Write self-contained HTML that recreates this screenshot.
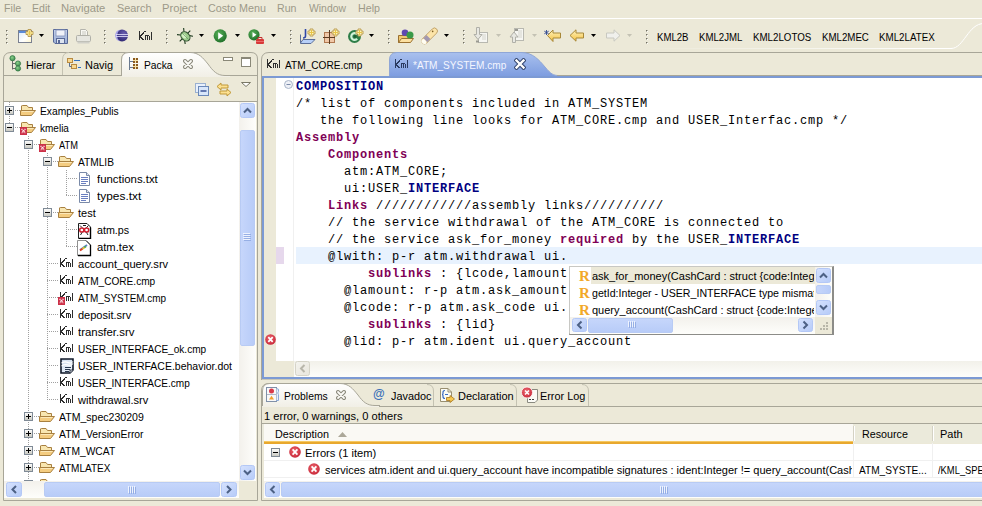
<!DOCTYPE html><html><head><meta charset="utf-8"><style>html,body{margin:0;padding:0;width:982px;height:506px;overflow:hidden;background:#ECE9D8;font-family:"Liberation Sans",sans-serif;position:relative}div,svg{box-sizing:border-box}</style></head><body>
<div style="position:absolute;left:4px;top:2px;font-size:11px;line-height:13px;white-space:pre;color:#9C9988;transform:scaleX(0.9688);transform-origin:0 0;">File</div>
<div style="position:absolute;left:32px;top:2px;font-size:11px;line-height:13px;white-space:pre;color:#9C9988;transform:scaleX(0.9611);transform-origin:0 0;">Edit</div>
<div style="position:absolute;left:61px;top:2px;font-size:11px;line-height:13px;white-space:pre;color:#9C9988;transform:scaleX(1.0214);transform-origin:0 0;">Navigate</div>
<div style="position:absolute;left:117px;top:2px;font-size:11px;line-height:13px;white-space:pre;color:#9C9988;transform:scaleX(0.9879);transform-origin:0 0;">Search</div>
<div style="position:absolute;left:162px;top:2px;font-size:11px;line-height:13px;white-space:pre;color:#9C9988;transform:scaleX(1.0152);transform-origin:0 0;">Project</div>
<div style="position:absolute;left:208px;top:2px;font-size:11px;line-height:13px;white-space:pre;color:#9C9988;transform:scaleX(0.9776);transform-origin:0 0;">Costo Menu</div>
<div style="position:absolute;left:277px;top:2px;font-size:11px;line-height:13px;white-space:pre;color:#9C9988;transform:scaleX(0.9632);transform-origin:0 0;">Run</div>
<div style="position:absolute;left:309px;top:2px;font-size:11px;line-height:13px;white-space:pre;color:#9C9988;transform:scaleX(0.9436);transform-origin:0 0;">Window</div>
<div style="position:absolute;left:358px;top:2px;font-size:11px;line-height:13px;white-space:pre;color:#9C9988;transform:scaleX(0.9714);transform-origin:0 0;">Help</div>
<div style="position:absolute;left:0px;top:18px;width:982px;height:1px;background:#fff"></div>
<svg style="position:absolute;left:900px;top:19px;" width="82" height="34" viewBox="0 0 82 34"><path d="M0 29.5H51C64 29.5 68 4.5 84 4.5" fill="none" stroke="#fff" stroke-width="1"/></svg>
<div style="position:absolute;left:640px;top:48px;width:312px;height:1px;background:linear-gradient(90deg,rgba(255,255,255,0),#fff)"></div>
<div style="position:absolute;left:6px;top:30px;width:2px;height:2px;background:#fff"></div>
<div style="position:absolute;left:6px;top:30px;width:1px;height:1px;background:#6E6C60"></div>
<div style="position:absolute;left:7px;top:30px;width:1px;height:1px;background:#B8B6A6"></div>
<div style="position:absolute;left:6px;top:31px;width:1px;height:1px;background:#B8B6A6"></div>
<div style="position:absolute;left:6px;top:34px;width:2px;height:2px;background:#fff"></div>
<div style="position:absolute;left:6px;top:34px;width:1px;height:1px;background:#6E6C60"></div>
<div style="position:absolute;left:7px;top:34px;width:1px;height:1px;background:#B8B6A6"></div>
<div style="position:absolute;left:6px;top:35px;width:1px;height:1px;background:#B8B6A6"></div>
<div style="position:absolute;left:6px;top:38px;width:2px;height:2px;background:#fff"></div>
<div style="position:absolute;left:6px;top:38px;width:1px;height:1px;background:#6E6C60"></div>
<div style="position:absolute;left:7px;top:38px;width:1px;height:1px;background:#B8B6A6"></div>
<div style="position:absolute;left:6px;top:39px;width:1px;height:1px;background:#B8B6A6"></div>
<div style="position:absolute;left:6px;top:42px;width:2px;height:2px;background:#fff"></div>
<div style="position:absolute;left:6px;top:42px;width:1px;height:1px;background:#6E6C60"></div>
<div style="position:absolute;left:7px;top:42px;width:1px;height:1px;background:#B8B6A6"></div>
<div style="position:absolute;left:6px;top:43px;width:1px;height:1px;background:#B8B6A6"></div>
<svg style="position:absolute;left:18px;top:29px;" width="16" height="15" viewBox="0 0 16 15"><defs><linearGradient id="nwg" x1="0" y1="0" x2="1" y2="1"><stop offset="0" stop-color="#D8E8FA"/><stop offset="0.6" stop-color="#FFFFFF"/><stop offset="1" stop-color="#FFF6C8"/></linearGradient></defs><rect x="0.5" y="1.5" width="13" height="12" fill="url(#nwg)" stroke="#7A8090"/><rect x="1" y="2" width="9" height="2" fill="#5A8AD8"/><path d="M10.0 0.5h3v2h2v3h-2v2h-3v-2h-2v-3h2z" fill="#FFF6B8" stroke="#B8964A" stroke-width="0.9" stroke-linejoin="round"/><path d="M11.5 1.5V6.5M9.0 4H14.0" stroke="#E8C448" stroke-width="1"/></svg>
<svg style="position:absolute;left:39px;top:34px;" width="5" height="3" viewBox="0 0 5 3"><path d="M0 0H5L2.5 3Z" fill="#000"/></svg>
<svg style="position:absolute;left:53px;top:29px;" width="16" height="15" viewBox="0 0 16 15"><defs><linearGradient id="svg1" x1="0" y1="0" x2="0" y2="1"><stop offset="0" stop-color="#C8D4EC"/><stop offset="1" stop-color="#98ACD4"/></linearGradient></defs><path d="M0.5 0.5H14.5V14.5H2L0.5 13Z" fill="url(#svg1)" stroke="#5A6A98"/><rect x="3" y="1" width="9" height="6" fill="#F0F2F8" stroke="#8090B8" stroke-width="0.8"/><rect x="3.5" y="9.5" width="8" height="5" fill="#DDE4F0" stroke="#5A6A98"/><rect x="5" y="11" width="2" height="3.5" fill="#5A6A98"/></svg>
<svg style="position:absolute;left:76px;top:29px;" width="16" height="15" viewBox="0 0 16 15"><path d="M4.5 6.5V0.5H9.5L11.5 2.5V6.5" fill="#F8F8F4" stroke="#B4B4AC"/><path d="M6 3H10M6 5H10" stroke="#C8C8C0"/><rect x="0.5" y="6.5" width="14" height="6" rx="1" fill="#E6E6E0" stroke="#B0B0A8"/><rect x="1.5" y="12.5" width="12" height="2" fill="#CFCFC8"/></svg>
<div style="position:absolute;left:104px;top:30px;width:2px;height:2px;background:#fff"></div>
<div style="position:absolute;left:104px;top:30px;width:1px;height:1px;background:#6E6C60"></div>
<div style="position:absolute;left:105px;top:30px;width:1px;height:1px;background:#B8B6A6"></div>
<div style="position:absolute;left:104px;top:31px;width:1px;height:1px;background:#B8B6A6"></div>
<div style="position:absolute;left:104px;top:34px;width:2px;height:2px;background:#fff"></div>
<div style="position:absolute;left:104px;top:34px;width:1px;height:1px;background:#6E6C60"></div>
<div style="position:absolute;left:105px;top:34px;width:1px;height:1px;background:#B8B6A6"></div>
<div style="position:absolute;left:104px;top:35px;width:1px;height:1px;background:#B8B6A6"></div>
<div style="position:absolute;left:104px;top:38px;width:2px;height:2px;background:#fff"></div>
<div style="position:absolute;left:104px;top:38px;width:1px;height:1px;background:#6E6C60"></div>
<div style="position:absolute;left:105px;top:38px;width:1px;height:1px;background:#B8B6A6"></div>
<div style="position:absolute;left:104px;top:39px;width:1px;height:1px;background:#B8B6A6"></div>
<div style="position:absolute;left:104px;top:42px;width:2px;height:2px;background:#fff"></div>
<div style="position:absolute;left:104px;top:42px;width:1px;height:1px;background:#6E6C60"></div>
<div style="position:absolute;left:105px;top:42px;width:1px;height:1px;background:#B8B6A6"></div>
<div style="position:absolute;left:104px;top:43px;width:1px;height:1px;background:#B8B6A6"></div>
<svg style="position:absolute;left:114px;top:29px;" width="15" height="14" viewBox="0 0 15 14"><defs><radialGradient id="ecl" cx="0.65" cy="0.35" r="0.7"><stop offset="0" stop-color="#6A5FB0"/><stop offset="1" stop-color="#2C2570"/></radialGradient></defs><circle cx="8" cy="6.5" r="6" fill="url(#ecl)"/><path d="M1 6.5Q2 1 6 0.8Q3 3 3 6.5Q3 10 6 12.2Q2 12 1 6.5Z" fill="#A8A4E8"/><path d="M2 5.5H14M2 7.5H14" stroke="#E8E8FF" stroke-width="0.8"/></svg>
<svg style="position:absolute;left:139px;top:31px;" width="13" height="9" viewBox="0 0 13 9"><g fill="#2E2E2E" shape-rendering="crispEdges"><rect x="0" y="0" width="1" height="9"/><rect x="1" y="4" width="1" height="2"/><rect x="2" y="3" width="1" height="2"/><rect x="3" y="2" width="1" height="2"/><rect x="4" y="1" width="1" height="2"/><rect x="5" y="0" width="2" height="1"/><rect x="1" y="6" width="2" height="1"/><rect x="2" y="7" width="2" height="1"/><rect x="3" y="8" width="2" height="1"/><rect x="6" y="4" width="4" height="1"/><rect x="6" y="5" width="1" height="4"/><rect x="8" y="5" width="1" height="4"/><rect x="10" y="5" width="1" height="4"/><rect x="12" y="1" width="1" height="8"/></g></svg>
<div style="position:absolute;left:166px;top:30px;width:2px;height:2px;background:#fff"></div>
<div style="position:absolute;left:166px;top:30px;width:1px;height:1px;background:#6E6C60"></div>
<div style="position:absolute;left:167px;top:30px;width:1px;height:1px;background:#B8B6A6"></div>
<div style="position:absolute;left:166px;top:31px;width:1px;height:1px;background:#B8B6A6"></div>
<div style="position:absolute;left:166px;top:34px;width:2px;height:2px;background:#fff"></div>
<div style="position:absolute;left:166px;top:34px;width:1px;height:1px;background:#6E6C60"></div>
<div style="position:absolute;left:167px;top:34px;width:1px;height:1px;background:#B8B6A6"></div>
<div style="position:absolute;left:166px;top:35px;width:1px;height:1px;background:#B8B6A6"></div>
<div style="position:absolute;left:166px;top:38px;width:2px;height:2px;background:#fff"></div>
<div style="position:absolute;left:166px;top:38px;width:1px;height:1px;background:#6E6C60"></div>
<div style="position:absolute;left:167px;top:38px;width:1px;height:1px;background:#B8B6A6"></div>
<div style="position:absolute;left:166px;top:39px;width:1px;height:1px;background:#B8B6A6"></div>
<div style="position:absolute;left:166px;top:42px;width:2px;height:2px;background:#fff"></div>
<div style="position:absolute;left:166px;top:42px;width:1px;height:1px;background:#6E6C60"></div>
<div style="position:absolute;left:167px;top:42px;width:1px;height:1px;background:#B8B6A6"></div>
<div style="position:absolute;left:166px;top:43px;width:1px;height:1px;background:#B8B6A6"></div>
<svg style="position:absolute;left:177px;top:28px;" width="16" height="16" viewBox="0 0 16 16"><g transform="rotate(-45 8 8)"><g stroke="#1E3A1E" stroke-width="1.1" fill="none"><path d="M5.5 4L3 1M10.5 4L13 1M4 8H0.5M12 8H15.5M4.5 11L2 14.5M11.5 11L14 14.5"/></g><ellipse cx="8" cy="8.5" rx="4" ry="5.2" fill="#9CCC8C" stroke="#2A4A2A" stroke-width="1"/><ellipse cx="7.2" cy="7.5" rx="1.8" ry="2.6" fill="#D4F0C4"/><path d="M8 4V13" stroke="#5A8A5A" stroke-width="0.6"/></g></svg>
<svg style="position:absolute;left:199px;top:34px;" width="5" height="3" viewBox="0 0 5 3"><path d="M0 0H5L2.5 3Z" fill="#000"/></svg>
<svg style="position:absolute;left:213px;top:29px;" width="15" height="14" viewBox="0 0 15 14"><defs><radialGradient id="rg" cx="0.4" cy="0.35" r="0.7"><stop offset="0" stop-color="#58B058"/><stop offset="1" stop-color="#1E6E28"/></radialGradient></defs><circle cx="7.2" cy="6.8" r="6.6" fill="url(#rg)"/><path d="M5.2 3.2L10.2 6.8L5.2 10.4Z" fill="#fff"/></svg>
<svg style="position:absolute;left:235px;top:34px;" width="5" height="3" viewBox="0 0 5 3"><path d="M0 0H5L2.5 3Z" fill="#000"/></svg>
<svg style="position:absolute;left:248px;top:29px;" width="18" height="16" viewBox="0 0 18 16"><defs><radialGradient id="rg2" cx="0.4" cy="0.35" r="0.7"><stop offset="0" stop-color="#58B058"/><stop offset="1" stop-color="#1E6E28"/></radialGradient></defs><circle cx="6" cy="5.8" r="5.6" fill="url(#rg2)"/><path d="M4.5 3L8.5 5.8L4.5 8.6Z" fill="#fff"/><rect x="8" y="10" width="8" height="5" rx="1" fill="#D83838"/><path d="M10 10V8.5H14V10" fill="none" stroke="#C03030"/><path d="M8 12.5H16" stroke="#F08080" stroke-width="0.7"/></svg>
<svg style="position:absolute;left:271px;top:34px;" width="5" height="3" viewBox="0 0 5 3"><path d="M0 0H5L2.5 3Z" fill="#000"/></svg>
<div style="position:absolute;left:290px;top:30px;width:2px;height:2px;background:#fff"></div>
<div style="position:absolute;left:290px;top:30px;width:1px;height:1px;background:#6E6C60"></div>
<div style="position:absolute;left:291px;top:30px;width:1px;height:1px;background:#B8B6A6"></div>
<div style="position:absolute;left:290px;top:31px;width:1px;height:1px;background:#B8B6A6"></div>
<div style="position:absolute;left:290px;top:34px;width:2px;height:2px;background:#fff"></div>
<div style="position:absolute;left:290px;top:34px;width:1px;height:1px;background:#6E6C60"></div>
<div style="position:absolute;left:291px;top:34px;width:1px;height:1px;background:#B8B6A6"></div>
<div style="position:absolute;left:290px;top:35px;width:1px;height:1px;background:#B8B6A6"></div>
<div style="position:absolute;left:290px;top:38px;width:2px;height:2px;background:#fff"></div>
<div style="position:absolute;left:290px;top:38px;width:1px;height:1px;background:#6E6C60"></div>
<div style="position:absolute;left:291px;top:38px;width:1px;height:1px;background:#B8B6A6"></div>
<div style="position:absolute;left:290px;top:39px;width:1px;height:1px;background:#B8B6A6"></div>
<div style="position:absolute;left:290px;top:42px;width:2px;height:2px;background:#fff"></div>
<div style="position:absolute;left:290px;top:42px;width:1px;height:1px;background:#6E6C60"></div>
<div style="position:absolute;left:291px;top:42px;width:1px;height:1px;background:#B8B6A6"></div>
<div style="position:absolute;left:290px;top:43px;width:1px;height:1px;background:#B8B6A6"></div>
<svg style="position:absolute;left:299px;top:28px;" width="18" height="17" viewBox="0 0 18 17"><path d="M1.5 6.5V15.5H12L16 11.5H4L1.5 15" fill="#B8D0F8" stroke="#5C6E98"/><path d="M6.5 1V8Q6.5 10 4 10" fill="none" stroke="#3048A8" stroke-width="1.6"/><path d="M11.0 1.0h3v2h2v3h-2v2h-3v-2h-2v-3h2z" fill="#FFF6B8" stroke="#B8964A" stroke-width="0.9" stroke-linejoin="round"/><path d="M12.5 2.0V7.0M10.0 4.5H15.0" stroke="#E8C448" stroke-width="1"/></svg>
<svg style="position:absolute;left:323px;top:28px;" width="17" height="17" viewBox="0 0 17 17"><rect x="1.5" y="4.5" width="10" height="10" fill="#F0C8A8" stroke="#B07850"/><path d="M6.5 2V16M0 9.5H12" stroke="#5A3A20"/><path d="M11.0 1.0h3v2h2v3h-2v2h-3v-2h-2v-3h2z" fill="#FFF6B8" stroke="#B8964A" stroke-width="0.9" stroke-linejoin="round"/><path d="M12.5 2.0V7.0M10.0 4.5H15.0" stroke="#E8C448" stroke-width="1"/></svg>
<svg style="position:absolute;left:347px;top:28px;" width="17" height="17" viewBox="0 0 17 17"><circle cx="7.5" cy="8.5" r="6.5" fill="#2E7E48"/><path d="M10.2 6.2A3.4 3.4 0 1 0 10.2 10.8" fill="none" stroke="#CFF2D8" stroke-width="2.2"/><circle cx="8" cy="8.5" r="1.4" fill="#1E5E34"/><path d="M11.0 1.0h3v2h2v3h-2v2h-3v-2h-2v-3h2z" fill="#FFF6B8" stroke="#B8964A" stroke-width="0.9" stroke-linejoin="round"/><path d="M12.5 2.0V7.0M10.0 4.5H15.0" stroke="#E8C448" stroke-width="1"/></svg>
<svg style="position:absolute;left:369px;top:34px;" width="5" height="3" viewBox="0 0 5 3"><path d="M0 0H5L2.5 3Z" fill="#000"/></svg>
<div style="position:absolute;left:388px;top:30px;width:2px;height:2px;background:#fff"></div>
<div style="position:absolute;left:388px;top:30px;width:1px;height:1px;background:#6E6C60"></div>
<div style="position:absolute;left:389px;top:30px;width:1px;height:1px;background:#B8B6A6"></div>
<div style="position:absolute;left:388px;top:31px;width:1px;height:1px;background:#B8B6A6"></div>
<div style="position:absolute;left:388px;top:34px;width:2px;height:2px;background:#fff"></div>
<div style="position:absolute;left:388px;top:34px;width:1px;height:1px;background:#6E6C60"></div>
<div style="position:absolute;left:389px;top:34px;width:1px;height:1px;background:#B8B6A6"></div>
<div style="position:absolute;left:388px;top:35px;width:1px;height:1px;background:#B8B6A6"></div>
<div style="position:absolute;left:388px;top:38px;width:2px;height:2px;background:#fff"></div>
<div style="position:absolute;left:388px;top:38px;width:1px;height:1px;background:#6E6C60"></div>
<div style="position:absolute;left:389px;top:38px;width:1px;height:1px;background:#B8B6A6"></div>
<div style="position:absolute;left:388px;top:39px;width:1px;height:1px;background:#B8B6A6"></div>
<div style="position:absolute;left:388px;top:42px;width:2px;height:2px;background:#fff"></div>
<div style="position:absolute;left:388px;top:42px;width:1px;height:1px;background:#6E6C60"></div>
<div style="position:absolute;left:389px;top:42px;width:1px;height:1px;background:#B8B6A6"></div>
<div style="position:absolute;left:388px;top:43px;width:1px;height:1px;background:#B8B6A6"></div>
<svg style="position:absolute;left:397px;top:28px;" width="18" height="16" viewBox="0 0 18 16"><path d="M1.5 7.5H13.5L13 14.5H1.5Z" fill="#F0C870" stroke="#9A7030"/><path d="M1.5 14.5L4.5 10.5H16.5L13.5 14.5Z" fill="#FCE0A0" stroke="#9A7030"/><circle cx="8" cy="4.8" r="3.3" fill="#6048B0"/><circle cx="13" cy="7" r="3.5" fill="#3A9A48"/></svg>
<svg style="position:absolute;left:420px;top:27px;" width="19" height="18" viewBox="0 0 19 18"><g transform="rotate(-45 9.5 9)"><rect x="-0.5" y="6" width="20" height="6" rx="3" fill="#FCE4A8" stroke="#B89860" stroke-width="0.8"/><rect x="3.5" y="6.2" width="4.5" height="5.6" fill="#A298B0"/><rect x="-0.5" y="6.2" width="4" height="5.6" rx="2.5" fill="#FFFDF2"/><circle cx="15" cy="8" r="0.8" fill="#7A5A20"/></g></svg>
<svg style="position:absolute;left:444px;top:34px;" width="5" height="3" viewBox="0 0 5 3"><path d="M0 0H5L2.5 3Z" fill="#000"/></svg>
<div style="position:absolute;left:463px;top:30px;width:2px;height:2px;background:#fff"></div>
<div style="position:absolute;left:463px;top:30px;width:1px;height:1px;background:#6E6C60"></div>
<div style="position:absolute;left:464px;top:30px;width:1px;height:1px;background:#B8B6A6"></div>
<div style="position:absolute;left:463px;top:31px;width:1px;height:1px;background:#B8B6A6"></div>
<div style="position:absolute;left:463px;top:34px;width:2px;height:2px;background:#fff"></div>
<div style="position:absolute;left:463px;top:34px;width:1px;height:1px;background:#6E6C60"></div>
<div style="position:absolute;left:464px;top:34px;width:1px;height:1px;background:#B8B6A6"></div>
<div style="position:absolute;left:463px;top:35px;width:1px;height:1px;background:#B8B6A6"></div>
<div style="position:absolute;left:463px;top:38px;width:2px;height:2px;background:#fff"></div>
<div style="position:absolute;left:463px;top:38px;width:1px;height:1px;background:#6E6C60"></div>
<div style="position:absolute;left:464px;top:38px;width:1px;height:1px;background:#B8B6A6"></div>
<div style="position:absolute;left:463px;top:39px;width:1px;height:1px;background:#B8B6A6"></div>
<div style="position:absolute;left:463px;top:42px;width:2px;height:2px;background:#fff"></div>
<div style="position:absolute;left:463px;top:42px;width:1px;height:1px;background:#6E6C60"></div>
<div style="position:absolute;left:464px;top:42px;width:1px;height:1px;background:#B8B6A6"></div>
<div style="position:absolute;left:463px;top:43px;width:1px;height:1px;background:#B8B6A6"></div>
<svg style="position:absolute;left:473px;top:27px;" width="16" height="17" viewBox="0 0 16 17"><rect x="5.5" y="5.5" width="9" height="10" fill="#F6F6F2" stroke="#B8B8B0"/><path d="M7 8H13M9 10H13M9 12H13" stroke="#D4D4CC"/><path d="M3.5 0.5H6.5V7.5H9L5 12.5L1 7.5H3.5Z" fill="#E8E8E2" stroke="#B0B0A8"/><rect x="3" y="13.5" width="3" height="2" fill="#9A9A92"/></svg>
<svg style="position:absolute;left:496px;top:34px;" width="5" height="3" viewBox="0 0 5 3"><path d="M0 0H5L2.5 3Z" fill="#C4C2B4"/></svg>
<svg style="position:absolute;left:509px;top:27px;" width="16" height="17" viewBox="0 0 16 17"><rect x="5.5" y="1.5" width="9" height="12" fill="#F6F6F2" stroke="#B8B8B0"/><path d="M9 4H13M9 6H13M9 8H13M9 10H13" stroke="#D4D4CC"/><rect x="6" y="2" width="3" height="2" fill="#9A9A92"/><path d="M3.5 15.5H6.5V10H9L5 5L1 10H3.5Z" fill="#E8E8E2" stroke="#B0B0A8"/></svg>
<svg style="position:absolute;left:532px;top:34px;" width="5" height="3" viewBox="0 0 5 3"><path d="M0 0H5L2.5 3Z" fill="#C4C2B4"/></svg>
<svg style="position:absolute;left:544px;top:29px;" width="18" height="14" viewBox="0 0 18 14"><defs><linearGradient id="yarr" x1="0" y1="0" x2="0" y2="1"><stop offset="0" stop-color="#FFF4C0"/><stop offset="1" stop-color="#F4C040"/></linearGradient></defs><path d="M3.5 6.5L9 1V4H16.5V9H9V12.5Z" fill="url(#yarr)" stroke="#A88838" stroke-linejoin="round"/><path d="M2.5 1V6M0.3 2.2L4.7 4.8M0.3 4.8L4.7 2.2" stroke="#304890" stroke-width="0.9"/></svg>
<svg style="position:absolute;left:569px;top:29px;" width="16" height="14" viewBox="0 0 16 14"><path d="M1 6.5L7 0.8V4H14.5V9H7V12.2Z" fill="url(#yarr)" stroke="#A88838" stroke-linejoin="round"/></svg>
<svg style="position:absolute;left:591px;top:34px;" width="5" height="3" viewBox="0 0 5 3"><path d="M0 0H5L2.5 3Z" fill="#000"/></svg>
<svg style="position:absolute;left:605px;top:29px;" width="16" height="14" viewBox="0 0 16 14"><path d="M15 6.5L9 0.8V4H1.5V9H9V12.2Z" fill="#F0F0EC" stroke="#C8C8C0" stroke-linejoin="round"/></svg>
<svg style="position:absolute;left:627px;top:34px;" width="5" height="3" viewBox="0 0 5 3"><path d="M0 0H5L2.5 3Z" fill="#C4C2B4"/></svg>
<div style="position:absolute;left:646px;top:30px;width:2px;height:2px;background:#fff"></div>
<div style="position:absolute;left:646px;top:30px;width:1px;height:1px;background:#6E6C60"></div>
<div style="position:absolute;left:647px;top:30px;width:1px;height:1px;background:#B8B6A6"></div>
<div style="position:absolute;left:646px;top:31px;width:1px;height:1px;background:#B8B6A6"></div>
<div style="position:absolute;left:646px;top:34px;width:2px;height:2px;background:#fff"></div>
<div style="position:absolute;left:646px;top:34px;width:1px;height:1px;background:#6E6C60"></div>
<div style="position:absolute;left:647px;top:34px;width:1px;height:1px;background:#B8B6A6"></div>
<div style="position:absolute;left:646px;top:35px;width:1px;height:1px;background:#B8B6A6"></div>
<div style="position:absolute;left:646px;top:38px;width:2px;height:2px;background:#fff"></div>
<div style="position:absolute;left:646px;top:38px;width:1px;height:1px;background:#6E6C60"></div>
<div style="position:absolute;left:647px;top:38px;width:1px;height:1px;background:#B8B6A6"></div>
<div style="position:absolute;left:646px;top:39px;width:1px;height:1px;background:#B8B6A6"></div>
<div style="position:absolute;left:646px;top:42px;width:2px;height:2px;background:#fff"></div>
<div style="position:absolute;left:646px;top:42px;width:1px;height:1px;background:#6E6C60"></div>
<div style="position:absolute;left:647px;top:42px;width:1px;height:1px;background:#B8B6A6"></div>
<div style="position:absolute;left:646px;top:43px;width:1px;height:1px;background:#B8B6A6"></div>
<div style="position:absolute;left:657px;top:31px;font-size:11px;line-height:13px;white-space:pre;color:#000;transform:scaleX(0.8743);transform-origin:0 0;">KML2B</div>
<div style="position:absolute;left:699px;top:31px;font-size:11px;line-height:13px;white-space:pre;color:#000;transform:scaleX(0.875);transform-origin:0 0;">KML2JML</div>
<div style="position:absolute;left:753px;top:31px;font-size:11px;line-height:13px;white-space:pre;color:#000;transform:scaleX(0.8846);transform-origin:0 0;">KML2LOTOS</div>
<div style="position:absolute;left:822px;top:31px;font-size:11px;line-height:13px;white-space:pre;color:#000;transform:scaleX(0.8808);transform-origin:0 0;">KML2MEC</div>
<div style="position:absolute;left:879px;top:31px;font-size:11px;line-height:13px;white-space:pre;color:#000;transform:scaleX(0.8871);transform-origin:0 0;">KML2LATEX</div>
<svg style="position:absolute;left:3px;top:52px;" width="255" height="449" viewBox="0 0 255 449"><path d="M0.5 448.5V8Q0.5 0.5 8 0.5H248Q254.5 0.5 254.5 7V448.5Z" fill="#ECE9D8" stroke="#A8A698"/></svg>
<svg style="position:absolute;left:3px;top:52px;" width="130" height="25" viewBox="0 0 130 25"><path d="M59.5 23V8Q59.5 0.5 66 0.5" fill="none" stroke="#C4C2B2"/><path d="M118.5 23V8Q118.5 0.5 125 0.5" fill="none" stroke="#C4C2B2"/></svg>
<svg style="position:absolute;left:120px;top:52px;" width="110" height="25" viewBox="0 0 110 25"><defs><linearGradient id="ptab" x1="0" y1="0" x2="0" y2="1"><stop offset="0" stop-color="#FFFFFF"/><stop offset="1" stop-color="#F1EFE6"/></linearGradient></defs><path d="M1.5 24V8Q1.5 0.5 9 0.5H70C79 0.5 83 6 88 12C93 19 97 23.5 105 23.5H110V25H1.5Z" fill="url(#ptab)"/><path d="M1.5 23V8Q1.5 0.5 9 0.5H70C79 0.5 83 6 88 12C93 19 97 23.5 105 23.5H110" fill="none" stroke="#A8A698"/></svg>
<div style="position:absolute;left:4px;top:75px;width:118px;height:1px;background:#A8A698"></div>
<div style="position:absolute;left:227px;top:75px;width:30px;height:1px;background:#A8A698"></div>
<svg style="position:absolute;left:9px;top:55px;" width="13" height="17" viewBox="0 0 13 17"><defs><radialGradient id="hg" cx="0.4" cy="0.35" r="0.7"><stop offset="0" stop-color="#8CD08C"/><stop offset="1" stop-color="#3A8A4A"/></radialGradient></defs><path d="M3.5 4V14.5M3.5 8.5H7M3.5 13.5H7" stroke="#6A6A6A" fill="none"/><circle cx="3.5" cy="3.2" r="2.6" fill="url(#hg)" stroke="#3A7A4A" stroke-width="0.8"/><circle cx="9" cy="8.5" r="2.6" fill="url(#hg)" stroke="#3A7A4A" stroke-width="0.8"/><circle cx="9" cy="13.5" r="2.6" fill="url(#hg)" stroke="#3A7A4A" stroke-width="0.8"/></svg>
<div style="position:absolute;left:26px;top:59px;font-size:11px;line-height:13px;white-space:pre;color:#000;transform:scaleX(0.9828);transform-origin:0 0;">Hierar</div>
<svg style="position:absolute;left:67px;top:58px;" width="16" height="12" viewBox="0 0 16 12"><rect x="0.5" y="0.5" width="5" height="4" fill="#F8D890" stroke="#B88A40"/><rect x="4.5" y="6.5" width="5" height="4" fill="#F8D890" stroke="#B88A40"/><path d="M2.5 5V8.5H4.5" stroke="#5A7090" fill="none"/><path d="M7 2.5H13" stroke="#3070C0"/><path d="M11 9.5H14" stroke="#3070C0"/></svg>
<div style="position:absolute;left:85px;top:59px;font-size:11px;line-height:13px;white-space:pre;color:#000;transform:scaleX(1.0);transform-origin:0 0;">Navig</div>
<svg style="position:absolute;left:128px;top:56px;" width="12" height="15" viewBox="0 0 12 15"><g shape-rendering="crispEdges"><rect x="1" y="1" width="1" height="13" fill="#6A7A90"/><rect x="1" y="5" width="4" height="1" fill="#6A7A90"/><rect x="1" y="11" width="4" height="1" fill="#6A7A90"/><rect x="5" y="2" width="5" height="5" fill="#F8E4A8"/><rect x="5" y="8" width="5" height="5" fill="#F8E4A8"/><g fill="#8A5A20"><rect x="5" y="2" width="2" height="2"/><rect x="5" y="5" width="2" height="2"/><rect x="8" y="2" width="2" height="2"/><rect x="8" y="5" width="2" height="2"/><rect x="5" y="8" width="2" height="2"/><rect x="5" y="11" width="2" height="2"/><rect x="8" y="8" width="2" height="2"/><rect x="8" y="11" width="2" height="2"/></g></g></svg>
<div style="position:absolute;left:144px;top:59px;font-size:11px;line-height:13px;white-space:pre;color:#000;transform:scaleX(0.9333);transform-origin:0 0;">Packa</div>
<svg style="position:absolute;left:183px;top:59px;" width="10" height="10" viewBox="0 0 10 10"><path d="M2 2L8 8M8 2L2 8" stroke="#8C8A7C" stroke-width="3.9" stroke-linecap="round"/><path d="M2 2L8 8M8 2L2 8" stroke="#FBFAF6" stroke-width="1.8" stroke-linecap="round"/></svg>
<div style="position:absolute;left:223px;top:57px;width:10px;height:4px;background:#fff;border:1px solid #8A8878"></div>
<div style="position:absolute;left:241px;top:57px;width:10px;height:10px;background:#fff;border:1px solid #8A8878;border-top-width:2px"></div>
<svg style="position:absolute;left:195px;top:83px;" width="14" height="13" viewBox="0 0 14 13"><rect x="0.5" y="0.5" width="10" height="9" fill="#E8F0FC" stroke="#9AB0D0"/><rect x="3.5" y="3.5" width="10" height="9" fill="#D8E6FA" stroke="#6A88B8"/><path d="M5.5 8H11.5" stroke="#304890" stroke-width="1.4"/></svg>
<svg style="position:absolute;left:216px;top:82px;" width="16" height="15" viewBox="0 0 16 15"><path d="M1 4.5L5 1V3H12V6H5V8Z" fill="#FCE090" stroke="#C09838" stroke-linejoin="round"/><path d="M15 10.5L11 7V9H4V12H11V14Z" fill="#FCE090" stroke="#C09838" stroke-linejoin="round"/></svg>
<svg style="position:absolute;left:241px;top:82px;" width="10" height="5" viewBox="0 0 10 5"><path d="M0.5 0.5H9.5L5 4.5Z" fill="#fff" stroke="#7A7866"/></svg>
<div style="position:absolute;left:4px;top:101px;width:253px;height:1px;background:#A8A698"></div>
<div style="position:absolute;left:4px;top:102px;width:235px;height:379px;background:#fff;overflow:hidden"></div>
<div style="position:absolute;left:9px;top:102px;width:1px;height:25px;background:repeating-linear-gradient(#A0A0A0 0 1px,transparent 1px 2px)"></div>
<div style="position:absolute;left:28px;top:136px;width:1px;height:348px;background:repeating-linear-gradient(#A0A0A0 0 1px,transparent 1px 2px)"></div>
<div style="position:absolute;left:47px;top:153px;width:1px;height:246px;background:repeating-linear-gradient(#A0A0A0 0 1px,transparent 1px 2px)"></div>
<div style="position:absolute;left:66px;top:170px;width:1px;height:25px;background:repeating-linear-gradient(#A0A0A0 0 1px,transparent 1px 2px)"></div>
<div style="position:absolute;left:66px;top:221px;width:1px;height:25px;background:repeating-linear-gradient(#A0A0A0 0 1px,transparent 1px 2px)"></div>
<div style="position:absolute;left:9px;top:110px;width:11px;height:1px;background:repeating-linear-gradient(90deg,#A0A0A0 0 1px,transparent 1px 2px)"></div>
<svg style="position:absolute;left:5px;top:106px;" width="9" height="9" viewBox="0 0 9 9"><defs><linearGradient id="eg" x1="0" y1="0" x2="0" y2="1"><stop offset="0" stop-color="#fff"/><stop offset="1" stop-color="#C6C6BE"/></linearGradient></defs><rect x="0.5" y="0.5" width="8" height="8" fill="url(#eg)" stroke="#7F8A96"/><path d="M2 4.5H7" stroke="#000"/><path d="M4.5 2V7" stroke="#000"/></svg>
<svg style="position:absolute;left:19px;top:102px;" width="17" height="17" viewBox="0 0 17 17"><path d="M2.5 8.5V4Q2.5 3.5 3.5 3.5H8L9.5 5.5H13.5V8.5" fill="#F8E6B0" stroke="#A88040"/><path d="M1.5 8.5H16.5L12.5 13.5H1.5Z" fill="#F4CC80" stroke="#A88040" stroke-linejoin="round"/><path d="M3 9.5H14.5" stroke="#FCE8B8"/></svg>
<div style="position:absolute;left:40px;top:105px;font-size:11px;line-height:13px;white-space:pre;color:#000;transform:scaleX(0.9325);transform-origin:0 0;">Examples_Publis</div>
<div style="position:absolute;left:9px;top:127px;width:11px;height:1px;background:repeating-linear-gradient(90deg,#A0A0A0 0 1px,transparent 1px 2px)"></div>
<svg style="position:absolute;left:5px;top:123px;" width="9" height="9" viewBox="0 0 9 9"><defs><linearGradient id="eg" x1="0" y1="0" x2="0" y2="1"><stop offset="0" stop-color="#fff"/><stop offset="1" stop-color="#C6C6BE"/></linearGradient></defs><rect x="0.5" y="0.5" width="8" height="8" fill="url(#eg)" stroke="#7F8A96"/><path d="M2 4.5H7" stroke="#000"/></svg>
<svg style="position:absolute;left:19px;top:119px;" width="17" height="17" viewBox="0 0 17 17"><path d="M2.5 8.5V4Q2.5 3.5 3.5 3.5H8L9.5 5.5H13.5V8.5" fill="#F8E6B0" stroke="#A88040"/><path d="M1.5 8.5H16.5L12.5 13.5H1.5Z" fill="#F4CC80" stroke="#A88040" stroke-linejoin="round"/><path d="M3 9.5H14.5" stroke="#FCE8B8"/><rect x="1" y="8" width="7" height="8" fill="#CC3048"/><path d="M2.6 9.8L6.4 14.2M6.4 9.8L2.6 14.2" stroke="#FFE8EC" stroke-width="1.3" stroke-dasharray="1.2 0.6"/></svg>
<div style="position:absolute;left:40px;top:122px;font-size:11px;line-height:13px;white-space:pre;color:#000;transform:scaleX(0.9097);transform-origin:0 0;">kmelia</div>
<div style="position:absolute;left:28px;top:144px;width:11px;height:1px;background:repeating-linear-gradient(90deg,#A0A0A0 0 1px,transparent 1px 2px)"></div>
<svg style="position:absolute;left:24px;top:140px;" width="9" height="9" viewBox="0 0 9 9"><defs><linearGradient id="eg" x1="0" y1="0" x2="0" y2="1"><stop offset="0" stop-color="#fff"/><stop offset="1" stop-color="#C6C6BE"/></linearGradient></defs><rect x="0.5" y="0.5" width="8" height="8" fill="url(#eg)" stroke="#7F8A96"/><path d="M2 4.5H7" stroke="#000"/></svg>
<svg style="position:absolute;left:38px;top:136px;" width="17" height="17" viewBox="0 0 17 17"><path d="M2.5 8.5V4Q2.5 3.5 3.5 3.5H8L9.5 5.5H13.5V8.5" fill="#F8E6B0" stroke="#A88040"/><path d="M1.5 8.5H16.5L12.5 13.5H1.5Z" fill="#F4CC80" stroke="#A88040" stroke-linejoin="round"/><path d="M3 9.5H14.5" stroke="#FCE8B8"/><rect x="1" y="8" width="7" height="8" fill="#CC3048"/><path d="M2.6 9.8L6.4 14.2M6.4 9.8L2.6 14.2" stroke="#FFE8EC" stroke-width="1.3" stroke-dasharray="1.2 0.6"/></svg>
<div style="position:absolute;left:59px;top:139px;font-size:11px;line-height:13px;white-space:pre;color:#000;transform:scaleX(0.8409);transform-origin:0 0;">ATM</div>
<div style="position:absolute;left:47px;top:161px;width:11px;height:1px;background:repeating-linear-gradient(90deg,#A0A0A0 0 1px,transparent 1px 2px)"></div>
<svg style="position:absolute;left:43px;top:157px;" width="9" height="9" viewBox="0 0 9 9"><defs><linearGradient id="eg" x1="0" y1="0" x2="0" y2="1"><stop offset="0" stop-color="#fff"/><stop offset="1" stop-color="#C6C6BE"/></linearGradient></defs><rect x="0.5" y="0.5" width="8" height="8" fill="url(#eg)" stroke="#7F8A96"/><path d="M2 4.5H7" stroke="#000"/></svg>
<svg style="position:absolute;left:57px;top:153px;" width="17" height="17" viewBox="0 0 17 17"><path d="M2.5 8.5V4Q2.5 3.5 3.5 3.5H8L9.5 5.5H13.5V8.5" fill="#F8E6B0" stroke="#A88040"/><path d="M1.5 8.5H16.5L12.5 13.5H1.5Z" fill="#F4CC80" stroke="#A88040" stroke-linejoin="round"/><path d="M3 9.5H14.5" stroke="#FCE8B8"/></svg>
<div style="position:absolute;left:78px;top:156px;font-size:11px;line-height:13px;white-space:pre;color:#000;transform:scaleX(0.9237);transform-origin:0 0;">ATMLIB</div>
<div style="position:absolute;left:66px;top:178px;width:11px;height:1px;background:repeating-linear-gradient(90deg,#A0A0A0 0 1px,transparent 1px 2px)"></div>
<svg style="position:absolute;left:77px;top:171px;" width="16" height="16" viewBox="0 0 16 16"><path d="M2.5 1.5H9.5L12.5 4.5V14.5H2.5Z" fill="#fff" stroke="#7A8AA8"/><path d="M9.5 1.5V4.5H12.5" fill="#DDE4F0" stroke="#7A8AA8"/><path d="M4 6.5H11M4 8.5H11M4 10.5H11M4 12.5H9" stroke="#6A7FC0"/></svg>
<div style="position:absolute;left:97px;top:173px;font-size:11px;line-height:13px;white-space:pre;color:#000;transform:scaleX(1.0356);transform-origin:0 0;">functions.txt</div>
<div style="position:absolute;left:66px;top:195px;width:11px;height:1px;background:repeating-linear-gradient(90deg,#A0A0A0 0 1px,transparent 1px 2px)"></div>
<svg style="position:absolute;left:77px;top:188px;" width="16" height="16" viewBox="0 0 16 16"><path d="M2.5 1.5H9.5L12.5 4.5V14.5H2.5Z" fill="#fff" stroke="#7A8AA8"/><path d="M9.5 1.5V4.5H12.5" fill="#DDE4F0" stroke="#7A8AA8"/><path d="M4 6.5H11M4 8.5H11M4 10.5H11M4 12.5H9" stroke="#6A7FC0"/></svg>
<div style="position:absolute;left:97px;top:190px;font-size:11px;line-height:13px;white-space:pre;color:#000;transform:scaleX(1.0805);transform-origin:0 0;">types.txt</div>
<div style="position:absolute;left:47px;top:212px;width:11px;height:1px;background:repeating-linear-gradient(90deg,#A0A0A0 0 1px,transparent 1px 2px)"></div>
<svg style="position:absolute;left:43px;top:208px;" width="9" height="9" viewBox="0 0 9 9"><defs><linearGradient id="eg" x1="0" y1="0" x2="0" y2="1"><stop offset="0" stop-color="#fff"/><stop offset="1" stop-color="#C6C6BE"/></linearGradient></defs><rect x="0.5" y="0.5" width="8" height="8" fill="url(#eg)" stroke="#7F8A96"/><path d="M2 4.5H7" stroke="#000"/></svg>
<svg style="position:absolute;left:57px;top:204px;" width="17" height="17" viewBox="0 0 17 17"><path d="M2.5 8.5V4Q2.5 3.5 3.5 3.5H8L9.5 5.5H13.5V8.5" fill="#F8E6B0" stroke="#A88040"/><path d="M1.5 8.5H16.5L12.5 13.5H1.5Z" fill="#F4CC80" stroke="#A88040" stroke-linejoin="round"/><path d="M3 9.5H14.5" stroke="#FCE8B8"/></svg>
<div style="position:absolute;left:78px;top:207px;font-size:11px;line-height:13px;white-space:pre;color:#000;">test</div>
<div style="position:absolute;left:66px;top:229px;width:11px;height:1px;background:repeating-linear-gradient(90deg,#A0A0A0 0 1px,transparent 1px 2px)"></div>
<svg style="position:absolute;left:77px;top:223px;" width="15" height="16" viewBox="0 0 15 16"><path d="M1.5 0.5H10L13.5 4V15.5H1.5Z" fill="#fff" stroke="#202020"/><path d="M13.5 4.5V15.5H2" stroke="#000" stroke-width="1.4" fill="none"/><circle cx="4.8" cy="7" r="2.1" fill="none" stroke="#D02030" stroke-width="1.5"/><circle cx="9.6" cy="7" r="2.1" fill="none" stroke="#D02030" stroke-width="1.5"/><path d="M3 2.5L5 4.5M11.5 2.5L9.5 4.5M3.5 12L5 9.5M11 12L9.5 9.5M6 2.5H9" stroke="#202020" fill="none"/></svg>
<div style="position:absolute;left:97px;top:224px;font-size:11px;line-height:13px;white-space:pre;color:#000;transform:scaleX(0.9727);transform-origin:0 0;">atm.ps</div>
<div style="position:absolute;left:66px;top:246px;width:11px;height:1px;background:repeating-linear-gradient(90deg,#A0A0A0 0 1px,transparent 1px 2px)"></div>
<svg style="position:absolute;left:76px;top:240px;" width="16" height="17" viewBox="0 0 16 17"><path d="M1.5 0.5H10L14.5 5V15.5H1.5Z" fill="#fff" stroke="#909090"/><path d="M14.5 5V15.5H2" stroke="#000" stroke-width="1.3" fill="none"/><path d="M10 0.5L14.5 5" stroke="#202020"/><path d="M4 10L11 5" stroke="#5A7AD0" stroke-width="1.8"/><path d="M4 10.5L6.5 8.8" stroke="#E04020" stroke-width="1.8"/><path d="M6.5 8.8L8.5 7.4" stroke="#F0C020" stroke-width="1.8"/><path d="M8.5 7.4L10 6.3" stroke="#50B050" stroke-width="1.8"/></svg>
<div style="position:absolute;left:97px;top:241px;font-size:11px;line-height:13px;white-space:pre;color:#000;transform:scaleX(1.0194);transform-origin:0 0;">atm.tex</div>
<div style="position:absolute;left:47px;top:263px;width:11px;height:1px;background:repeating-linear-gradient(90deg,#A0A0A0 0 1px,transparent 1px 2px)"></div>
<svg style="position:absolute;left:60px;top:258px;" width="13" height="9" viewBox="0 0 13 9"><g fill="#2E2E2E" shape-rendering="crispEdges"><rect x="0" y="0" width="1" height="9"/><rect x="1" y="4" width="1" height="2"/><rect x="2" y="3" width="1" height="2"/><rect x="3" y="2" width="1" height="2"/><rect x="4" y="1" width="1" height="2"/><rect x="5" y="0" width="2" height="1"/><rect x="1" y="6" width="2" height="1"/><rect x="2" y="7" width="2" height="1"/><rect x="3" y="8" width="2" height="1"/><rect x="6" y="4" width="4" height="1"/><rect x="6" y="5" width="1" height="4"/><rect x="8" y="5" width="1" height="4"/><rect x="10" y="5" width="1" height="4"/><rect x="12" y="1" width="1" height="8"/></g></svg>
<div style="position:absolute;left:78px;top:258px;font-size:11px;line-height:13px;white-space:pre;color:#000;transform:scaleX(1.0124);transform-origin:0 0;">account_query.srv</div>
<div style="position:absolute;left:47px;top:280px;width:11px;height:1px;background:repeating-linear-gradient(90deg,#A0A0A0 0 1px,transparent 1px 2px)"></div>
<svg style="position:absolute;left:60px;top:275px;" width="13" height="9" viewBox="0 0 13 9"><g fill="#2E2E2E" shape-rendering="crispEdges"><rect x="0" y="0" width="1" height="9"/><rect x="1" y="4" width="1" height="2"/><rect x="2" y="3" width="1" height="2"/><rect x="3" y="2" width="1" height="2"/><rect x="4" y="1" width="1" height="2"/><rect x="5" y="0" width="2" height="1"/><rect x="1" y="6" width="2" height="1"/><rect x="2" y="7" width="2" height="1"/><rect x="3" y="8" width="2" height="1"/><rect x="6" y="4" width="4" height="1"/><rect x="6" y="5" width="1" height="4"/><rect x="8" y="5" width="1" height="4"/><rect x="10" y="5" width="1" height="4"/><rect x="12" y="1" width="1" height="8"/></g></svg>
<div style="position:absolute;left:78px;top:275px;font-size:11px;line-height:13px;white-space:pre;color:#000;transform:scaleX(0.9179);transform-origin:0 0;">ATM_CORE.cmp</div>
<div style="position:absolute;left:47px;top:297px;width:11px;height:1px;background:repeating-linear-gradient(90deg,#A0A0A0 0 1px,transparent 1px 2px)"></div>
<svg style="position:absolute;left:60px;top:292px;" width="13" height="9" viewBox="0 0 13 9"><g fill="#2E2E2E" shape-rendering="crispEdges"><rect x="0" y="0" width="1" height="9"/><rect x="1" y="4" width="1" height="2"/><rect x="2" y="3" width="1" height="2"/><rect x="3" y="2" width="1" height="2"/><rect x="4" y="1" width="1" height="2"/><rect x="5" y="0" width="2" height="1"/><rect x="1" y="6" width="2" height="1"/><rect x="2" y="7" width="2" height="1"/><rect x="3" y="8" width="2" height="1"/><rect x="6" y="4" width="4" height="1"/><rect x="6" y="5" width="1" height="4"/><rect x="8" y="5" width="1" height="4"/><rect x="10" y="5" width="1" height="4"/><rect x="12" y="1" width="1" height="8"/></g></svg>
<svg style="position:absolute;left:58px;top:297px;" width="7" height="8" viewBox="0 0 7 8"><rect width="7" height="8" fill="#CC3048"/><path d="M1.6 1.8L5.4 6.2M5.4 1.8L1.6 6.2" stroke="#FFE8EC" stroke-width="1.3" stroke-dasharray="1.2 0.6"/></svg>
<div style="position:absolute;left:78px;top:292px;font-size:11px;line-height:13px;white-space:pre;color:#000;transform:scaleX(0.9031);transform-origin:0 0;">ATM_SYSTEM.cmp</div>
<div style="position:absolute;left:47px;top:314px;width:11px;height:1px;background:repeating-linear-gradient(90deg,#A0A0A0 0 1px,transparent 1px 2px)"></div>
<svg style="position:absolute;left:60px;top:309px;" width="13" height="9" viewBox="0 0 13 9"><g fill="#2E2E2E" shape-rendering="crispEdges"><rect x="0" y="0" width="1" height="9"/><rect x="1" y="4" width="1" height="2"/><rect x="2" y="3" width="1" height="2"/><rect x="3" y="2" width="1" height="2"/><rect x="4" y="1" width="1" height="2"/><rect x="5" y="0" width="2" height="1"/><rect x="1" y="6" width="2" height="1"/><rect x="2" y="7" width="2" height="1"/><rect x="3" y="8" width="2" height="1"/><rect x="6" y="4" width="4" height="1"/><rect x="6" y="5" width="1" height="4"/><rect x="8" y="5" width="1" height="4"/><rect x="10" y="5" width="1" height="4"/><rect x="12" y="1" width="1" height="8"/></g></svg>
<div style="position:absolute;left:78px;top:309px;font-size:11px;line-height:13px;white-space:pre;color:#000;transform:scaleX(1.0);transform-origin:0 0;">deposit.srv</div>
<div style="position:absolute;left:47px;top:331px;width:11px;height:1px;background:repeating-linear-gradient(90deg,#A0A0A0 0 1px,transparent 1px 2px)"></div>
<svg style="position:absolute;left:60px;top:326px;" width="13" height="9" viewBox="0 0 13 9"><g fill="#2E2E2E" shape-rendering="crispEdges"><rect x="0" y="0" width="1" height="9"/><rect x="1" y="4" width="1" height="2"/><rect x="2" y="3" width="1" height="2"/><rect x="3" y="2" width="1" height="2"/><rect x="4" y="1" width="1" height="2"/><rect x="5" y="0" width="2" height="1"/><rect x="1" y="6" width="2" height="1"/><rect x="2" y="7" width="2" height="1"/><rect x="3" y="8" width="2" height="1"/><rect x="6" y="4" width="4" height="1"/><rect x="6" y="5" width="1" height="4"/><rect x="8" y="5" width="1" height="4"/><rect x="10" y="5" width="1" height="4"/><rect x="12" y="1" width="1" height="8"/></g></svg>
<div style="position:absolute;left:78px;top:326px;font-size:11px;line-height:13px;white-space:pre;color:#000;transform:scaleX(1.0364);transform-origin:0 0;">transfer.srv</div>
<div style="position:absolute;left:47px;top:348px;width:11px;height:1px;background:repeating-linear-gradient(90deg,#A0A0A0 0 1px,transparent 1px 2px)"></div>
<svg style="position:absolute;left:60px;top:343px;" width="13" height="9" viewBox="0 0 13 9"><g fill="#2E2E2E" shape-rendering="crispEdges"><rect x="0" y="0" width="1" height="9"/><rect x="1" y="4" width="1" height="2"/><rect x="2" y="3" width="1" height="2"/><rect x="3" y="2" width="1" height="2"/><rect x="4" y="1" width="1" height="2"/><rect x="5" y="0" width="2" height="1"/><rect x="1" y="6" width="2" height="1"/><rect x="2" y="7" width="2" height="1"/><rect x="3" y="8" width="2" height="1"/><rect x="6" y="4" width="4" height="1"/><rect x="6" y="5" width="1" height="4"/><rect x="8" y="5" width="1" height="4"/><rect x="10" y="5" width="1" height="4"/><rect x="12" y="1" width="1" height="8"/></g></svg>
<div style="position:absolute;left:78px;top:343px;font-size:11px;line-height:13px;white-space:pre;color:#000;transform:scaleX(0.9158);transform-origin:0 0;">USER_INTERFACE_ok.cmp</div>
<div style="position:absolute;left:47px;top:365px;width:11px;height:1px;background:repeating-linear-gradient(90deg,#A0A0A0 0 1px,transparent 1px 2px)"></div>
<svg style="position:absolute;left:60px;top:358px;" width="15" height="16" viewBox="0 0 15 16"><defs><linearGradient id="dotg" x1="0" y1="0" x2="1" y2="1"><stop offset="0" stop-color="#C8D8EC"/><stop offset="1" stop-color="#F4F8FC"/></linearGradient></defs><path d="M1 1H13V12L10 15H1Z" fill="url(#dotg)" stroke="#101828" stroke-width="1.6"/><path d="M1.5 5Q5 3 8 4.5T13 3.5M1.5 8Q5 6 8 7T13 5.5" stroke="#fff" stroke-width="1.1" fill="none"/><path d="M5 9.5H11M5 11.5H10M5 13.5H9" stroke="#283850" stroke-width="1"/><path d="M10 15V12H13" fill="#E0E8F0" stroke="#101828" stroke-width="0.8"/></svg>
<div style="position:absolute;left:78px;top:360px;font-size:11px;line-height:13px;white-space:pre;color:#000;transform:scaleX(0.9544);transform-origin:0 0;">USER_INTERFACE.behavior.dot</div>
<div style="position:absolute;left:47px;top:382px;width:11px;height:1px;background:repeating-linear-gradient(90deg,#A0A0A0 0 1px,transparent 1px 2px)"></div>
<svg style="position:absolute;left:60px;top:377px;" width="13" height="9" viewBox="0 0 13 9"><g fill="#2E2E2E" shape-rendering="crispEdges"><rect x="0" y="0" width="1" height="9"/><rect x="1" y="4" width="1" height="2"/><rect x="2" y="3" width="1" height="2"/><rect x="3" y="2" width="1" height="2"/><rect x="4" y="1" width="1" height="2"/><rect x="5" y="0" width="2" height="1"/><rect x="1" y="6" width="2" height="1"/><rect x="2" y="7" width="2" height="1"/><rect x="3" y="8" width="2" height="1"/><rect x="6" y="4" width="4" height="1"/><rect x="6" y="5" width="1" height="4"/><rect x="8" y="5" width="1" height="4"/><rect x="10" y="5" width="1" height="4"/><rect x="12" y="1" width="1" height="8"/></g></svg>
<div style="position:absolute;left:78px;top:377px;font-size:11px;line-height:13px;white-space:pre;color:#000;transform:scaleX(0.9149);transform-origin:0 0;">USER_INTERFACE.cmp</div>
<div style="position:absolute;left:47px;top:399px;width:11px;height:1px;background:repeating-linear-gradient(90deg,#A0A0A0 0 1px,transparent 1px 2px)"></div>
<svg style="position:absolute;left:60px;top:394px;" width="13" height="9" viewBox="0 0 13 9"><g fill="#2E2E2E" shape-rendering="crispEdges"><rect x="0" y="0" width="1" height="9"/><rect x="1" y="4" width="1" height="2"/><rect x="2" y="3" width="1" height="2"/><rect x="3" y="2" width="1" height="2"/><rect x="4" y="1" width="1" height="2"/><rect x="5" y="0" width="2" height="1"/><rect x="1" y="6" width="2" height="1"/><rect x="2" y="7" width="2" height="1"/><rect x="3" y="8" width="2" height="1"/><rect x="6" y="4" width="4" height="1"/><rect x="6" y="5" width="1" height="4"/><rect x="8" y="5" width="1" height="4"/><rect x="10" y="5" width="1" height="4"/><rect x="12" y="1" width="1" height="8"/></g></svg>
<div style="position:absolute;left:78px;top:394px;font-size:11px;line-height:13px;white-space:pre;color:#000;transform:scaleX(1.0086);transform-origin:0 0;">withdrawal.srv</div>
<div style="position:absolute;left:28px;top:416px;width:11px;height:1px;background:repeating-linear-gradient(90deg,#A0A0A0 0 1px,transparent 1px 2px)"></div>
<svg style="position:absolute;left:24px;top:412px;" width="9" height="9" viewBox="0 0 9 9"><defs><linearGradient id="eg" x1="0" y1="0" x2="0" y2="1"><stop offset="0" stop-color="#fff"/><stop offset="1" stop-color="#C6C6BE"/></linearGradient></defs><rect x="0.5" y="0.5" width="8" height="8" fill="url(#eg)" stroke="#7F8A96"/><path d="M2 4.5H7" stroke="#000"/><path d="M4.5 2V7" stroke="#000"/></svg>
<svg style="position:absolute;left:38px;top:408px;" width="17" height="17" viewBox="0 0 17 17"><path d="M2.5 8.5V4Q2.5 3.5 3.5 3.5H8L9.5 5.5H13.5V8.5" fill="#F8E6B0" stroke="#A88040"/><path d="M1.5 8.5H16.5L12.5 13.5H1.5Z" fill="#F4CC80" stroke="#A88040" stroke-linejoin="round"/><path d="M3 9.5H14.5" stroke="#FCE8B8"/></svg>
<div style="position:absolute;left:59px;top:411px;font-size:11px;line-height:13px;white-space:pre;color:#000;transform:scaleX(0.958);transform-origin:0 0;">ATM_spec230209</div>
<div style="position:absolute;left:28px;top:433px;width:11px;height:1px;background:repeating-linear-gradient(90deg,#A0A0A0 0 1px,transparent 1px 2px)"></div>
<svg style="position:absolute;left:24px;top:429px;" width="9" height="9" viewBox="0 0 9 9"><defs><linearGradient id="eg" x1="0" y1="0" x2="0" y2="1"><stop offset="0" stop-color="#fff"/><stop offset="1" stop-color="#C6C6BE"/></linearGradient></defs><rect x="0.5" y="0.5" width="8" height="8" fill="url(#eg)" stroke="#7F8A96"/><path d="M2 4.5H7" stroke="#000"/><path d="M4.5 2V7" stroke="#000"/></svg>
<svg style="position:absolute;left:38px;top:425px;" width="17" height="17" viewBox="0 0 17 17"><path d="M2.5 8.5V4Q2.5 3.5 3.5 3.5H8L9.5 5.5H13.5V8.5" fill="#F8E6B0" stroke="#A88040"/><path d="M1.5 8.5H16.5L12.5 13.5H1.5Z" fill="#F4CC80" stroke="#A88040" stroke-linejoin="round"/><path d="M3 9.5H14.5" stroke="#FCE8B8"/></svg>
<div style="position:absolute;left:59px;top:428px;font-size:11px;line-height:13px;white-space:pre;color:#000;transform:scaleX(0.9433);transform-origin:0 0;">ATM_VersionError</div>
<div style="position:absolute;left:28px;top:450px;width:11px;height:1px;background:repeating-linear-gradient(90deg,#A0A0A0 0 1px,transparent 1px 2px)"></div>
<svg style="position:absolute;left:24px;top:446px;" width="9" height="9" viewBox="0 0 9 9"><defs><linearGradient id="eg" x1="0" y1="0" x2="0" y2="1"><stop offset="0" stop-color="#fff"/><stop offset="1" stop-color="#C6C6BE"/></linearGradient></defs><rect x="0.5" y="0.5" width="8" height="8" fill="url(#eg)" stroke="#7F8A96"/><path d="M2 4.5H7" stroke="#000"/><path d="M4.5 2V7" stroke="#000"/></svg>
<svg style="position:absolute;left:38px;top:442px;" width="17" height="17" viewBox="0 0 17 17"><path d="M2.5 8.5V4Q2.5 3.5 3.5 3.5H8L9.5 5.5H13.5V8.5" fill="#F8E6B0" stroke="#A88040"/><path d="M1.5 8.5H16.5L12.5 13.5H1.5Z" fill="#F4CC80" stroke="#A88040" stroke-linejoin="round"/><path d="M3 9.5H14.5" stroke="#FCE8B8"/></svg>
<div style="position:absolute;left:59px;top:445px;font-size:11px;line-height:13px;white-space:pre;color:#000;transform:scaleX(0.935);transform-origin:0 0;">ATM_WCAT</div>
<div style="position:absolute;left:28px;top:467px;width:11px;height:1px;background:repeating-linear-gradient(90deg,#A0A0A0 0 1px,transparent 1px 2px)"></div>
<svg style="position:absolute;left:24px;top:463px;" width="9" height="9" viewBox="0 0 9 9"><defs><linearGradient id="eg" x1="0" y1="0" x2="0" y2="1"><stop offset="0" stop-color="#fff"/><stop offset="1" stop-color="#C6C6BE"/></linearGradient></defs><rect x="0.5" y="0.5" width="8" height="8" fill="url(#eg)" stroke="#7F8A96"/><path d="M2 4.5H7" stroke="#000"/><path d="M4.5 2V7" stroke="#000"/></svg>
<svg style="position:absolute;left:38px;top:459px;" width="17" height="17" viewBox="0 0 17 17"><path d="M2.5 8.5V4Q2.5 3.5 3.5 3.5H8L9.5 5.5H13.5V8.5" fill="#F8E6B0" stroke="#A88040"/><path d="M1.5 8.5H16.5L12.5 13.5H1.5Z" fill="#F4CC80" stroke="#A88040" stroke-linejoin="round"/><path d="M3 9.5H14.5" stroke="#FCE8B8"/></svg>
<div style="position:absolute;left:59px;top:462px;font-size:11px;line-height:13px;white-space:pre;color:#000;transform:scaleX(0.9125);transform-origin:0 0;">ATMLATEX</div>
<div style="position:absolute;left:28px;top:484px;width:11px;height:1px;background:repeating-linear-gradient(90deg,#A0A0A0 0 1px,transparent 1px 2px)"></div>
<svg style="position:absolute;left:24px;top:480px;" width="9" height="9" viewBox="0 0 9 9"><defs><linearGradient id="eg" x1="0" y1="0" x2="0" y2="1"><stop offset="0" stop-color="#fff"/><stop offset="1" stop-color="#C6C6BE"/></linearGradient></defs><rect x="0.5" y="0.5" width="8" height="8" fill="url(#eg)" stroke="#7F8A96"/><path d="M2 4.5H7" stroke="#000"/><path d="M4.5 2V7" stroke="#000"/></svg>
<svg style="position:absolute;left:38px;top:476px;" width="17" height="17" viewBox="0 0 17 17"><path d="M2.5 8.5V4Q2.5 3.5 3.5 3.5H8L9.5 5.5H13.5V8.5" fill="#F8E6B0" stroke="#A88040"/><path d="M1.5 8.5H16.5L12.5 13.5H1.5Z" fill="#F4CC80" stroke="#A88040" stroke-linejoin="round"/><path d="M3 9.5H14.5" stroke="#FCE8B8"/></svg>
<div style="position:absolute;left:239px;top:102px;width:17px;height:379px;background:linear-gradient(90deg,#F3F1EC,#FEFEFB)"></div>
<svg style="position:absolute;left:240px;top:103px;" width="15" height="15" viewBox="0 0 15 15"><defs><linearGradient id="sb240_103" x1="0" y1="0" x2="1" y2="1"><stop offset="0" stop-color="#D6E2FE"/><stop offset="1" stop-color="#B6CBF8"/></linearGradient></defs><rect x="0.5" y="0.5" width="14" height="14" rx="2" fill="url(#sb240_103)" stroke="#B4C8F6"/><path d="M4.0 9.5L7.5 6.0L11.0 9.5" fill="none" stroke="#4D6185" stroke-width="2"/></svg>
<div style="position:absolute;left:240px;top:130px;width:15px;height:216px;border:1px solid #B8CBF4;border-radius:2px;background:linear-gradient(90deg,#C6D6FB,#B8CCF8)"></div>
<svg style="position:absolute;left:243px;top:233px;" width="8" height="8" viewBox="0 0 8 8"><path d="M0 0.5H7M0 2.5H7M0 4.5H7M0 6.5H7" stroke="#EEF3FE"/><path d="M1 1.5H8M1 3.5H8M1 5.5H8M1 7.5H8" stroke="#8CA6E0" stroke-width="0.8"/></svg>
<svg style="position:absolute;left:240px;top:465px;" width="15" height="15" viewBox="0 0 15 15"><defs><linearGradient id="sb240_465" x1="0" y1="0" x2="1" y2="1"><stop offset="0" stop-color="#D6E2FE"/><stop offset="1" stop-color="#B6CBF8"/></linearGradient></defs><rect x="0.5" y="0.5" width="14" height="14" rx="2" fill="url(#sb240_465)" stroke="#B4C8F6"/><path d="M4.0 5.5L7.5 9.0L11.0 5.5" fill="none" stroke="#4D6185" stroke-width="2"/></svg>
<div style="position:absolute;left:4px;top:481px;width:235px;height:17px;background:linear-gradient(#F3F1EC,#FEFEFB)"></div>
<svg style="position:absolute;left:6px;top:482px;" width="16" height="15" viewBox="0 0 16 15"><defs><linearGradient id="sb6_482" x1="0" y1="0" x2="1" y2="1"><stop offset="0" stop-color="#D6E2FE"/><stop offset="1" stop-color="#B6CBF8"/></linearGradient></defs><rect x="0.5" y="0.5" width="15" height="14" rx="2" fill="url(#sb6_482)" stroke="#B4C8F6"/><path d="M10.0 4.0L6.5 7.5L10.0 11.0" fill="none" stroke="#4D6185" stroke-width="2"/></svg>
<div style="position:absolute;left:44px;top:482px;width:176px;height:15px;border:1px solid #B8CBF4;border-radius:2px;background:linear-gradient(#C6D6FB,#B8CCF8)"></div>
<svg style="position:absolute;left:128px;top:486px;" width="8" height="8" viewBox="0 0 8 8"><path d="M0.5 0V7M2.5 0V7M4.5 0V7M6.5 0V7" stroke="#EEF3FE"/><path d="M1.5 1V8M3.5 1V8M5.5 1V8M7.5 1V8" stroke="#8CA6E0" stroke-width="0.8"/></svg>
<svg style="position:absolute;left:221px;top:482px;" width="16" height="15" viewBox="0 0 16 15"><defs><linearGradient id="sb221_482" x1="0" y1="0" x2="1" y2="1"><stop offset="0" stop-color="#D6E2FE"/><stop offset="1" stop-color="#B6CBF8"/></linearGradient></defs><rect x="0.5" y="0.5" width="15" height="14" rx="2" fill="url(#sb221_482)" stroke="#B4C8F6"/><path d="M6.0 4.0L9.5 7.5L6.0 11.0" fill="none" stroke="#4D6185" stroke-width="2"/></svg>
<div style="position:absolute;left:239px;top:481px;width:17px;height:17px;background:#ECE9D8"></div>
<svg style="position:absolute;left:261px;top:52px;" width="721" height="328" viewBox="0 0 721 328"><path d="M0.5 328V8Q0.5 0.5 8 0.5H723V328Z" fill="#ECE9D8" stroke="#A8A698"/></svg>
<svg style="position:absolute;left:267px;top:59px;" width="13" height="9" viewBox="0 0 13 9"><g fill="#2E2E2E" shape-rendering="crispEdges"><rect x="0" y="0" width="1" height="9"/><rect x="1" y="4" width="1" height="2"/><rect x="2" y="3" width="1" height="2"/><rect x="3" y="2" width="1" height="2"/><rect x="4" y="1" width="1" height="2"/><rect x="5" y="0" width="2" height="1"/><rect x="1" y="6" width="2" height="1"/><rect x="2" y="7" width="2" height="1"/><rect x="3" y="8" width="2" height="1"/><rect x="6" y="4" width="4" height="1"/><rect x="6" y="5" width="1" height="4"/><rect x="8" y="5" width="1" height="4"/><rect x="10" y="5" width="1" height="4"/><rect x="12" y="1" width="1" height="8"/></g></svg>
<div style="position:absolute;left:285px;top:59px;font-size:11px;line-height:13px;white-space:pre;color:#000;transform:scaleX(0.9202);transform-origin:0 0;">ATM_CORE.cmp</div>
<svg style="position:absolute;left:389px;top:52px;" width="170" height="26" viewBox="0 0 170 26"><defs><linearGradient id="etab" x1="0" y1="0" x2="0" y2="1"><stop offset="0" stop-color="#A9C0EE"/><stop offset="1" stop-color="#7A9ADF"/></linearGradient></defs><path d="M0.5 25V8Q0.5 0.5 8 0.5H132C144 0.5 150 8 156 15C162 22 164 23.5 170 23.5V26H0.5Z" fill="url(#etab)"/><path d="M0.5 24V8Q0.5 0.5 8 0.5H132C144 0.5 150 8 156 15C162 22 164 23.5 170 23.5" fill="none" stroke="#8FA6D6"/></svg>
<svg style="position:absolute;left:395px;top:59px;" width="13" height="9" viewBox="0 0 13 9"><g fill="#2A3A60" shape-rendering="crispEdges"><rect x="0" y="0" width="1" height="9"/><rect x="1" y="4" width="1" height="2"/><rect x="2" y="3" width="1" height="2"/><rect x="3" y="2" width="1" height="2"/><rect x="4" y="1" width="1" height="2"/><rect x="5" y="0" width="2" height="1"/><rect x="1" y="6" width="2" height="1"/><rect x="2" y="7" width="2" height="1"/><rect x="3" y="8" width="2" height="1"/><rect x="6" y="4" width="4" height="1"/><rect x="6" y="5" width="1" height="4"/><rect x="8" y="5" width="1" height="4"/><rect x="10" y="5" width="1" height="4"/><rect x="12" y="1" width="1" height="8"/></g></svg>
<div style="position:absolute;left:413px;top:59px;font-size:11px;line-height:13px;white-space:pre;color:#F4F6FF;transform:scaleX(0.9157);transform-origin:0 0;">*ATM_SYSTEM.cmp</div>
<svg style="position:absolute;left:514px;top:58px;" width="12" height="12" viewBox="0 0 12 12"><path d="M2.5 2.5L9.5 9.5M9.5 2.5L2.5 9.5" stroke="#34466E" stroke-width="4.4" stroke-linecap="square"/><path d="M2.5 2.5L9.5 9.5M9.5 2.5L2.5 9.5" stroke="#fff" stroke-width="2.3" stroke-linecap="square"/></svg>
<div style="position:absolute;left:557px;top:75px;width:425px;height:1px;background:#A8A698"></div>
<div style="position:absolute;left:262px;top:76px;width:720px;height:2px;background:#7C9AD4"></div>
<div style="position:absolute;left:262px;top:76px;width:2px;height:303px;background:#7C9AD4"></div>
<div style="position:absolute;left:262px;top:377px;width:720px;height:2px;background:#7C9AD4"></div>
<div style="position:absolute;left:264px;top:78px;width:12px;height:299px;background:#ECE9D8"></div>
<div style="position:absolute;left:276px;top:78px;width:706px;height:283px;background:#fff"></div>
<div style="position:absolute;left:293px;top:78px;width:1px;height:283px;background:#F0F0F0"></div>
<div style="position:absolute;left:294px;top:361px;width:688px;height:16px;background:linear-gradient(#F2F1EA,#FEFEFB)"></div>
<div style="position:absolute;left:276px;top:361px;width:18px;height:16px;background:#ECE9D8"></div>
<svg style="position:absolute;left:295px;top:361px;" width="15" height="15" viewBox="0 0 15 15"><defs><linearGradient id="sb295_361" x1="0" y1="0" x2="1" y2="1"><stop offset="0" stop-color="#F4F3EE"/><stop offset="1" stop-color="#E8E6DC"/></linearGradient></defs><rect x="0.5" y="0.5" width="14" height="14" rx="2" fill="url(#sb295_361)" stroke="#D6D4C8"/><path d="M9.5 4.0L6.0 7.5L9.5 11.0" fill="none" stroke="#B8B6AA" stroke-width="2"/></svg>
<div style="position:absolute;left:296px;top:247px;width:686px;height:17px;background:#E8F2FE"></div>
<div style="position:absolute;left:276px;top:247px;width:8px;height:17px;background:#E6D8EC"></div>
<svg style="position:absolute;left:284px;top:80px;" width="9" height="9" viewBox="0 0 9 9"><circle cx="4.5" cy="4.5" r="4" fill="#EEF0F6" stroke="#A8B4C8"/><path d="M2.5 4.5H6.5" stroke="#7A8AA8"/></svg>
<svg style="position:absolute;left:265px;top:334px;" width="11" height="11" viewBox="0 0 11 11"><defs><radialGradient id="erg" cx="0.45" cy="0.4" r="0.6"><stop offset="0" stop-color="#F06A70"/><stop offset="1" stop-color="#C8283A"/></radialGradient></defs><circle cx="5.5" cy="5.5" r="5.3" fill="url(#erg)"/><path d="M3.3 3.08L7.699999999999999 7.92M7.699999999999999 3.08L3.3 7.92" stroke="#fff" stroke-width="1.7"/></svg>
<div style="position:absolute;left:296px;top:79px;font:12px 'Liberation Mono',monospace;letter-spacing:0.8px;line-height:17px;white-space:pre;color:#000"><span style="color:#000080;font-weight:bold">COMPOSITION</span></div>
<div style="position:absolute;left:296px;top:96px;font:12px 'Liberation Mono',monospace;letter-spacing:0.8px;line-height:17px;white-space:pre;color:#000">/* list of components included in ATM_SYSTEM</div>
<div style="position:absolute;left:296px;top:113px;font:12px 'Liberation Mono',monospace;letter-spacing:0.8px;line-height:17px;white-space:pre;color:#000">   the following line looks for ATM_CORE.cmp and USER_Interfac.cmp */</div>
<div style="position:absolute;left:296px;top:130px;font:12px 'Liberation Mono',monospace;letter-spacing:0.8px;line-height:17px;white-space:pre;color:#000"><span style="color:#7F0055;font-weight:bold">Assembly</span></div>
<div style="position:absolute;left:296px;top:147px;font:12px 'Liberation Mono',monospace;letter-spacing:0.8px;line-height:17px;white-space:pre;color:#000">    <span style="color:#7F0055;font-weight:bold">Components</span></div>
<div style="position:absolute;left:296px;top:164px;font:12px 'Liberation Mono',monospace;letter-spacing:0.8px;line-height:17px;white-space:pre;color:#000">      atm:ATM_CORE;</div>
<div style="position:absolute;left:296px;top:181px;font:12px 'Liberation Mono',monospace;letter-spacing:0.8px;line-height:17px;white-space:pre;color:#000">      ui:USER_<span style="color:#000080;font-weight:bold">INTERFACE</span></div>
<div style="position:absolute;left:296px;top:198px;font:12px 'Liberation Mono',monospace;letter-spacing:0.8px;line-height:17px;white-space:pre;color:#000">    <span style="color:#7F0055;font-weight:bold">Links</span> ////////////assembly links//////////</div>
<div style="position:absolute;left:296px;top:215px;font:12px 'Liberation Mono',monospace;letter-spacing:0.8px;line-height:17px;white-space:pre;color:#000">    // the service withdrawal of the ATM_CORE is connected to</div>
<div style="position:absolute;left:296px;top:232px;font:12px 'Liberation Mono',monospace;letter-spacing:0.8px;line-height:17px;white-space:pre;color:#000">    // the service ask_for_money <span style="color:#7F0055;font-weight:bold">required</span> by the USER_<span style="color:#000080;font-weight:bold">INTERFACE</span></div>
<div style="position:absolute;left:296px;top:249px;font:12px 'Liberation Mono',monospace;letter-spacing:0.8px;line-height:17px;white-space:pre;color:#000">    @lwith: p-r atm.withdrawal ui.</div>
<div style="position:absolute;left:296px;top:266px;font:12px 'Liberation Mono',monospace;letter-spacing:0.8px;line-height:17px;white-space:pre;color:#000">         <span style="color:#7F0055;font-weight:bold">sublinks</span> : {lcode,lamount</div>
<div style="position:absolute;left:296px;top:283px;font:12px 'Liberation Mono',monospace;letter-spacing:0.8px;line-height:17px;white-space:pre;color:#000">      @lamount: r-p atm.ask_amount</div>
<div style="position:absolute;left:296px;top:300px;font:12px 'Liberation Mono',monospace;letter-spacing:0.8px;line-height:17px;white-space:pre;color:#000">      @lcode: r-p atm.ask_code ui.</div>
<div style="position:absolute;left:296px;top:317px;font:12px 'Liberation Mono',monospace;letter-spacing:0.8px;line-height:17px;white-space:pre;color:#000">         <span style="color:#7F0055;font-weight:bold">sublinks</span> : {lid}</div>
<div style="position:absolute;left:296px;top:334px;font:12px 'Liberation Mono',monospace;letter-spacing:0.8px;line-height:17px;white-space:pre;color:#000">      @lid: p-r atm.ident ui.query_account</div>
<div style="position:absolute;left:569px;top:266px;width:265px;height:69px;background:#fff;border:1px solid #C8C8C4;border-right:2px solid #8C8C88;border-bottom:2px solid #8C8C88"></div>
<div style="position:absolute;left:591px;top:267px;width:224px;height:17px;background:#ECE9D8"></div>
<div style="position:absolute;left:579px;top:269px;font:bold 15px 'Liberation Serif';line-height:15px;color:#F2A828">R</div>
<div style="position:absolute;left:592px;top:267px;width:222px;height:17px;overflow:hidden"><div style="position:absolute;left:0;top:3px;font-size:11px;line-height:13px;white-space:pre;transform:scaleX(1.0);transform-origin:0 0">ask_for_money(CashCard : struct {code:Integer</div></div>
<div style="position:absolute;left:579px;top:286px;font:bold 15px 'Liberation Serif';line-height:15px;color:#F2A828">R</div>
<div style="position:absolute;left:592px;top:284px;width:222px;height:17px;overflow:hidden"><div style="position:absolute;left:0;top:3px;font-size:11px;line-height:13px;white-space:pre;transform:scaleX(0.965);transform-origin:0 0">getId:Integer - USER_INTERFACE type mismatch</div></div>
<div style="position:absolute;left:579px;top:303px;font:bold 15px 'Liberation Serif';line-height:15px;color:#F2A828">R</div>
<div style="position:absolute;left:592px;top:301px;width:222px;height:17px;overflow:hidden"><div style="position:absolute;left:0;top:3px;font-size:11px;line-height:13px;white-space:pre;transform:scaleX(1.0);transform-origin:0 0">query_account(CashCard : struct {code:Integer</div></div>
<div style="position:absolute;left:815px;top:267px;width:17px;height:50px;background:linear-gradient(90deg,#F3F1EC,#FEFEFB)"></div>
<svg style="position:absolute;left:816px;top:268px;" width="15" height="15" viewBox="0 0 15 15"><defs><linearGradient id="sb816_268" x1="0" y1="0" x2="1" y2="1"><stop offset="0" stop-color="#D6E2FE"/><stop offset="1" stop-color="#B6CBF8"/></linearGradient></defs><rect x="0.5" y="0.5" width="14" height="14" rx="2" fill="url(#sb816_268)" stroke="#B4C8F6"/><path d="M4.0 9.5L7.5 6.0L11.0 9.5" fill="none" stroke="#4D6185" stroke-width="2"/></svg>
<div style="position:absolute;left:816px;top:285px;width:15px;height:9px;border:1px solid #B8CBF4;border-radius:2px;background:linear-gradient(90deg,#C6D6FB,#B8CCF8)"></div>
<svg style="position:absolute;left:816px;top:300px;" width="15" height="15" viewBox="0 0 15 15"><defs><linearGradient id="sb816_300" x1="0" y1="0" x2="1" y2="1"><stop offset="0" stop-color="#D6E2FE"/><stop offset="1" stop-color="#B6CBF8"/></linearGradient></defs><rect x="0.5" y="0.5" width="14" height="14" rx="2" fill="url(#sb816_300)" stroke="#B4C8F6"/><path d="M4.0 5.5L7.5 9.0L11.0 5.5" fill="none" stroke="#4D6185" stroke-width="2"/></svg>
<div style="position:absolute;left:570px;top:317px;width:245px;height:17px;background:linear-gradient(#F3F1EC,#FEFEFB)"></div>
<svg style="position:absolute;left:572px;top:318px;" width="15" height="14" viewBox="0 0 15 14"><defs><linearGradient id="sb572_318" x1="0" y1="0" x2="1" y2="1"><stop offset="0" stop-color="#D6E2FE"/><stop offset="1" stop-color="#B6CBF8"/></linearGradient></defs><rect x="0.5" y="0.5" width="14" height="13" rx="2" fill="url(#sb572_318)" stroke="#B4C8F6"/><path d="M9.5 3.5L6.0 7.0L9.5 10.5" fill="none" stroke="#4D6185" stroke-width="2"/></svg>
<div style="position:absolute;left:588px;top:318px;width:85px;height:15px;border:1px solid #B8CBF4;border-radius:2px;background:linear-gradient(#C6D6FB,#B8CCF8)"></div>
<svg style="position:absolute;left:628px;top:321px;" width="8" height="7" viewBox="0 0 8 7"><path d="M0.5 0V6M2.5 0V6M4.5 0V6M6.5 0V6" stroke="#EEF3FE"/><path d="M1.5 1V7M3.5 1V7M5.5 1V7M7.5 1V7" stroke="#8CA6E0" stroke-width="0.8"/></svg>
<svg style="position:absolute;left:798px;top:318px;" width="15" height="14" viewBox="0 0 15 14"><defs><linearGradient id="sb798_318" x1="0" y1="0" x2="1" y2="1"><stop offset="0" stop-color="#D6E2FE"/><stop offset="1" stop-color="#B6CBF8"/></linearGradient></defs><rect x="0.5" y="0.5" width="14" height="13" rx="2" fill="url(#sb798_318)" stroke="#B4C8F6"/><path d="M5.5 3.5L9.0 7.0L5.5 10.5" fill="none" stroke="#4D6185" stroke-width="2"/></svg>
<div style="position:absolute;left:815px;top:317px;width:17px;height:17px;background:#ECE9D8"></div>
<svg style="position:absolute;left:818px;top:320px;" width="12" height="12" viewBox="0 0 12 12"><g fill="#B8B6A8"><rect x="8" y="2" width="2" height="2"/><rect x="5" y="5" width="2" height="2"/><rect x="8" y="5" width="2" height="2"/><rect x="2" y="8" width="2" height="2"/><rect x="5" y="8" width="2" height="2"/><rect x="8" y="8" width="2" height="2"/></g></svg>
<svg style="position:absolute;left:261px;top:383px;" width="721" height="118" viewBox="0 0 721 118"><path d="M0.5 117.5V8Q0.5 0.5 8 0.5H723V117.5Z" fill="#ECE9D8" stroke="#A8A698"/></svg>
<svg style="position:absolute;left:262px;top:383px;" width="118" height="24" viewBox="0 0 118 24"><defs><linearGradient id="prtab" x1="0" y1="0" x2="0" y2="1"><stop offset="0" stop-color="#FFFFFF"/><stop offset="1" stop-color="#F1EFE6"/></linearGradient></defs><path d="M0 24V8Q0 1 7.5 0.5H78C87 0.5 91 6 96 12C101 19 105 22.5 113 22.5H118V24Z" fill="url(#prtab)"/><path d="M0.5 23V8Q0.5 0.5 8 0.5H78C87 0.5 91 6 96 12C101 19 105 22.5 113 22.5H118" fill="none" stroke="#A8A698"/></svg>
<div style="position:absolute;left:379px;top:406px;width:603px;height:1px;background:#A8A698"></div>
<svg style="position:absolute;left:427px;top:384px;" width="8" height="22" viewBox="0 0 8 22"><path d="M6.5 22V7Q6.5 0.5 0 0.5" fill="none" stroke="#C4C2B2"/></svg>
<svg style="position:absolute;left:510px;top:384px;" width="8" height="22" viewBox="0 0 8 22"><path d="M6.5 22V7Q6.5 0.5 0 0.5" fill="none" stroke="#C4C2B2"/></svg>
<svg style="position:absolute;left:582px;top:384px;" width="8" height="22" viewBox="0 0 8 22"><path d="M6.5 22V7Q6.5 0.5 0 0.5" fill="none" stroke="#C4C2B2"/></svg>
<svg style="position:absolute;left:266px;top:387px;" width="14" height="15" viewBox="0 0 14 15"><rect x="0.5" y="0.5" width="10" height="14" fill="#F8F8F8" stroke="#8090A8"/><path d="M1 7.5H10" stroke="#B0B8C8"/><circle cx="5.5" cy="4" r="2.5" fill="#D83A4A"/><path d="M3 12.5L5.5 8.8L8 12.5Z" fill="#F0A030"/><path d="M10.5 1.5Q13.5 1.5 12.5 4.5Q11 6 12.5 7.5V13.5H10.5" fill="#E8F0FC" stroke="#8AA8D8"/></svg>
<div style="position:absolute;left:284px;top:390px;font-size:11px;line-height:13px;white-space:pre;color:#000;transform:scaleX(0.94);transform-origin:0 0;">Problems</div>
<svg style="position:absolute;left:336px;top:390px;" width="10" height="10" viewBox="0 0 10 10"><path d="M2 2L8 8M8 2L2 8" stroke="#8C8A7C" stroke-width="3.9" stroke-linecap="round"/><path d="M2 2L8 8M8 2L2 8" stroke="#FBFAF6" stroke-width="1.8" stroke-linecap="round"/></svg>
<div style="position:absolute;left:373px;top:387px;font:bold 12px 'Liberation Sans';line-height:14px;color:#3A70B8">@</div>
<div style="position:absolute;left:391px;top:390px;font-size:11px;line-height:13px;white-space:pre;color:#000;transform:scaleX(0.9878);transform-origin:0 0;">Javadoc</div>
<svg style="position:absolute;left:439px;top:387px;" width="17" height="17" viewBox="0 0 17 17"><path d="M1.5 1.5H9L12.5 5V14.5H1.5Z" fill="#FBFBF4" stroke="#988E70"/><path d="M9 1.5V5H12.5" fill="none" stroke="#988E70"/><path d="M6 3.5Q4 3.5 4 5.5V6.5Q4 7.5 3 7.5Q4 7.5 4 8.5V9.5Q4 11.5 6 11.5" fill="none" stroke="#3A6AC0" stroke-width="1.2"/><path d="M6 7.5H9" stroke="#3A6AC0"/><path d="M7.5 10.5H11V8.5L15.5 12L11 15.5V13.5H7.5Z" fill="#F8C850" stroke="#B08028" stroke-width="0.9" stroke-linejoin="round"/></svg>
<div style="position:absolute;left:458px;top:390px;font-size:11px;line-height:13px;white-space:pre;color:#000;transform:scaleX(1.0);transform-origin:0 0;">Declaration</div>
<svg style="position:absolute;left:521px;top:386px;" width="18" height="18" viewBox="0 0 18 18"><path d="M6.5 3.5H16.5V14L14 16.5H6.5Z" fill="#FBFBF6" stroke="#8A8A80"/><path d="M8 13.5H10M11 13.5H13" stroke="#404040"/><defs><radialGradient id="elg" cx="0.45" cy="0.4" r="0.6"><stop offset="0" stop-color="#F07078"/><stop offset="1" stop-color="#C82838"/></radialGradient></defs><circle cx="6" cy="6.5" r="5.5" fill="url(#elg)" stroke="#fff" stroke-width="0.8"/><path d="M4 4.5L8 8.5M8 4.5L4 8.5" stroke="#fff" stroke-width="1.5"/></svg>
<div style="position:absolute;left:540px;top:390px;font-size:11px;line-height:13px;white-space:pre;color:#000;transform:scaleX(0.9864);transform-origin:0 0;">Error Log</div>
<div style="position:absolute;left:264px;top:410px;font-size:11px;line-height:13px;white-space:pre;color:#000;transform:scaleX(1.011);transform-origin:0 0;">1 error, 0 warnings, 0 others</div>
<div style="position:absolute;left:262px;top:423px;width:720px;height:1px;background:#A8A698"></div>
<div style="position:absolute;left:262px;top:424px;width:720px;height:19px;background:#EBEADB"></div>
<div style="position:absolute;left:264px;top:424px;width:589px;height:18px;background:#FAF9F4"></div>
<div style="position:absolute;left:264px;top:441px;width:589px;height:1px;background:#F6C860"></div>
<div style="position:absolute;left:264px;top:442px;width:589px;height:2px;background:#E8A82E"></div>
<div style="position:absolute;left:853px;top:426px;width:1px;height:15px;background:#D4D2C4"></div>
<div style="position:absolute;left:854px;top:426px;width:1px;height:15px;background:#fff"></div>
<div style="position:absolute;left:932px;top:426px;width:1px;height:15px;background:#D4D2C4"></div>
<div style="position:absolute;left:933px;top:426px;width:1px;height:15px;background:#fff"></div>
<div style="position:absolute;left:275px;top:428px;font-size:11px;line-height:13px;white-space:pre;color:#000;transform:scaleX(0.9815);transform-origin:0 0;">Description</div>
<svg style="position:absolute;left:338px;top:432px;" width="9" height="5" viewBox="0 0 9 5"><path d="M0 5L4.5 0L9 5Z" fill="#ACA899"/></svg>
<div style="position:absolute;left:862px;top:428px;font-size:11px;line-height:13px;white-space:pre;color:#000;transform:scaleX(0.9761);transform-origin:0 0;">Resource</div>
<div style="position:absolute;left:940px;top:428px;font-size:11px;line-height:13px;white-space:pre;color:#000;transform:scaleX(1.0);transform-origin:0 0;">Path</div>
<div style="position:absolute;left:264px;top:444px;width:718px;height:37px;background:#fff"></div>
<div style="position:absolute;left:264px;top:460px;width:718px;height:1px;background:#F0F0F0"></div>
<div style="position:absolute;left:264px;top:477px;width:718px;height:1px;background:#F0F0F0"></div>
<div style="position:absolute;left:853px;top:443px;width:1px;height:35px;background:#F0F0F0"></div>
<div style="position:absolute;left:932px;top:443px;width:1px;height:35px;background:#F0F0F0"></div>
<svg style="position:absolute;left:271px;top:448px;" width="9" height="9" viewBox="0 0 9 9"><defs><linearGradient id="eg" x1="0" y1="0" x2="0" y2="1"><stop offset="0" stop-color="#fff"/><stop offset="1" stop-color="#C6C6BE"/></linearGradient></defs><rect x="0.5" y="0.5" width="8" height="8" fill="url(#eg)" stroke="#7F8A96"/><path d="M2 4.5H7" stroke="#000"/></svg>
<svg style="position:absolute;left:289px;top:446px;" width="12" height="12" viewBox="0 0 12 12"><defs><radialGradient id="erg" cx="0.45" cy="0.4" r="0.6"><stop offset="0" stop-color="#F06A70"/><stop offset="1" stop-color="#C8283A"/></radialGradient></defs><circle cx="6.0" cy="6.0" r="5.8" fill="url(#erg)"/><path d="M3.5999999999999996 3.3600000000000003L8.399999999999999 8.64M8.399999999999999 3.3600000000000003L3.5999999999999996 8.64" stroke="#fff" stroke-width="1.7"/></svg>
<div style="position:absolute;left:305px;top:447px;font-size:11px;line-height:13px;white-space:pre;color:#000;transform:scaleX(1.0145);transform-origin:0 0;">Errors (1 item)</div>
<svg style="position:absolute;left:308px;top:463px;" width="12" height="12" viewBox="0 0 12 12"><defs><radialGradient id="erg" cx="0.45" cy="0.4" r="0.6"><stop offset="0" stop-color="#F06A70"/><stop offset="1" stop-color="#C8283A"/></radialGradient></defs><circle cx="6.0" cy="6.0" r="5.8" fill="url(#erg)"/><path d="M3.5999999999999996 3.3600000000000003L8.399999999999999 8.64M8.399999999999999 3.3600000000000003L3.5999999999999996 8.64" stroke="#fff" stroke-width="1.7"/></svg>
<div style="position:absolute;left:325px;top:461px;width:527px;height:17px;overflow:hidden"><div style="position:absolute;left:0;top:3px;font-size:11px;line-height:13px;white-space:pre;transform:scaleX(1.0);transform-origin:0 0">services atm.ident and ui.query_account have incompatible signatures : ident:Integer != query_account(CashCard : struct</div></div>
<div style="position:absolute;left:859px;top:464px;font-size:11px;line-height:13px;white-space:pre;color:#000;transform:scaleX(0.9178);transform-origin:0 0;">ATM_SYSTE...</div>
<div style="position:absolute;left:938px;top:464px;font-size:11px;line-height:13px;white-space:pre;color:#000;transform:scaleX(0.8525);transform-origin:0 0;">/KML_SPEC</div>
<div style="position:absolute;left:264px;top:481px;width:718px;height:17px;background:linear-gradient(#F3F1EC,#FEFEFB)"></div>
<svg style="position:absolute;left:265px;top:482px;" width="15" height="15" viewBox="0 0 15 15"><defs><linearGradient id="sb265_482" x1="0" y1="0" x2="1" y2="1"><stop offset="0" stop-color="#D6E2FE"/><stop offset="1" stop-color="#B6CBF8"/></linearGradient></defs><rect x="0.5" y="0.5" width="14" height="14" rx="2" fill="url(#sb265_482)" stroke="#B4C8F6"/><path d="M9.5 4.0L6.0 7.5L9.5 11.0" fill="none" stroke="#4D6185" stroke-width="2"/></svg>
<div style="position:absolute;left:281px;top:482px;width:711px;height:15px;border:1px solid #B8CBF4;border-radius:2px;background:linear-gradient(#C6D6FB,#B8CCF8)"></div>
<svg style="position:absolute;left:660px;top:486px;" width="8" height="8" viewBox="0 0 8 8"><path d="M0.5 0V7M2.5 0V7M4.5 0V7M6.5 0V7" stroke="#EEF3FE"/><path d="M1.5 1V8M3.5 1V8M5.5 1V8M7.5 1V8" stroke="#8CA6E0" stroke-width="0.8"/></svg>
</body></html>
